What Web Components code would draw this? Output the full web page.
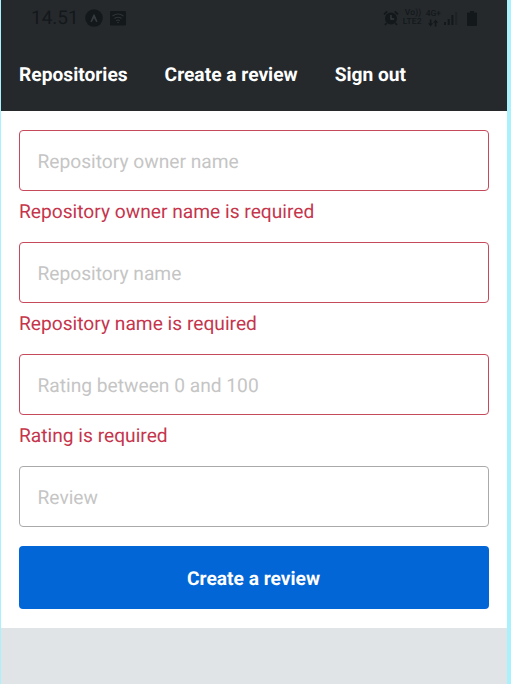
<!DOCTYPE html>
<html lang="en">
<head>
<meta charset="utf-8">
<title>Create a review</title>
<style>
html, body { margin: 0; height: 100%; }
body { font-family: Roboto, "Liberation Sans", sans-serif; font-size: 19.2px; text-rendering: geometricPrecision; }
</style>
</head>
<body>
<review-app></review-app>
<script>
const define = (name, html) => {
  const template = document.createElement('template');
  template.innerHTML = html;
  customElements.define(name, class extends HTMLElement {
    constructor() {
      super();
      this.attachShadow({ mode: 'open' }).append(template.content.cloneNode(true));
    }
  });
};

define('status-bar', `
<style>
:host { display: flex; align-items: center; justify-content: space-between; box-sizing: border-box; height: 36px; padding: 0 30px 0 30px; color: #13181b; }
.group { display: flex; align-items: center; }
.time { font-size: 19px; width: 54px; line-height: 20px; }
svg { display: block; fill: currentColor; }
.tiny { display: grid; font-size: 8.5px; line-height: 9px; font-weight: 500; }
.tiny span { height: 9px; white-space: nowrap; }
.volte { width: 23px; letter-spacing: .2px; }
</style>
<div class="group">
  <span class="time">14.51</span>
  <svg width="18" height="18" viewBox="0 0 18 18"><circle cx="9" cy="9" r="8.8"/><path d="M5.4 12.8 8.2 5.9Q9 4.8 9.8 5.9L12.6 12.8 11.2 13 9 9.2 6.8 13Z" fill="#343a3d"/></svg>
  <svg width="16" height="15" viewBox="0 0 16 15" style="margin-left:7px"><rect width="16" height="14.5" rx="1"/><path d="M2.5 5Q8 1 13.5 5M4.5 7.5Q8 4.9 11.5 7.5M6.2 9.8Q8 8.3 9.8 9.8" fill="none" stroke="#2e3437" stroke-width="1.1"/><circle cx="8" cy="11.5" r=".8" fill="#2e3437"/></svg>
</div>
<div class="group">
  <svg width="16" height="16" viewBox="0 0 16 16"><circle cx="8" cy="8.5" r="6"/><path d="M1 4.4 4.2 1.4M15 4.4 11.8 1.4M3.7 13 2 15M12.3 13 14 15" stroke="currentColor" stroke-width="1.8"/><path d="M8 5v4h3.2" fill="none" stroke="#343a3d" stroke-width="1.3"/></svg>
  <div class="tiny volte" style="margin-left:4px"><span style="padding-left:2px">Vo))</span><span>LTE2</span></div>
  <div class="tiny"><span>4G+</span><svg width="14" height="8" viewBox="0 0 14 8"><path d="M3.8.5h1.6v3.8h1.8L4.6 7.5 2 4.3h1.8ZM8.8 7.5h1.6V3.7h1.8L9.6.5 7 3.7h1.8Z"/></svg></div>
  <svg width="14" height="14" viewBox="0 0 14 14" style="margin:0 0 0 3px"><path d="M0 11h2v3H0ZM3.7 8h2v6h-2ZM7.4 4h2v10h-2Z"/><path d="M11.2 1h2v13h-2Z" opacity=".35"/></svg>
  <svg width="10" height="15" viewBox="0 0 10 15" style="margin-left:9px"><path d="M3 0h4v1.5h2.2q.8 0 .8.8v11.9q0 .8-.8.8H.8Q0 15 0 14.2V2.3q0-.8.8-.8H3Z"/></svg>
</div>`);

define('nav-tab', `
<style>:host { display: block; font-weight: 700; line-height: 22px; color: #fff; white-space: nowrap; }</style>
<slot></slot>`);

define('app-bar', `
<style>
:host { display: block; box-sizing: border-box; height: 111px; background: #25292c; }
nav { display: flex; gap: 37px; padding: 28px 18px 0; }
</style>
<status-bar></status-bar>
<nav><slot></slot></nav>`);

define('form-field', `
<style>
:host { display: block; color: #c5354c; height: 112px; }
:host([plain]) { height: 80px; }
.box { display: flex; align-items: center; box-sizing: border-box; height: 61px; padding: 2px 17.5px 0; border: 1.4px solid #c44a5c; border-radius: 4px; color: #c5c5c5; line-height: 22px; }
:host([plain]) .box { border-color: #aaa; }
.error { line-height: 22px; margin-top: 10px; }
</style>
<div class="box"><slot></slot></div>
<div class="error"><slot name="error"></slot></div>`);

define('submit-button', `
<style>
:host { display: flex; align-items: center; justify-content: center; box-sizing: border-box; height: 63px; padding: 1px 1px 0 0; border-radius: 4px; background: #0366d6; color: #fff; font-weight: 700; }
</style>
<slot></slot>`);

define('review-app', `
<style>
:host { display: flex; flex-direction: column; box-sizing: border-box; height: 100vh; overflow: hidden; background: #e1e4e6; border: solid #a9f1fc; border-width: 0 4px 0 1px; }
.form { box-sizing: border-box; height: 517px; padding: 19px 18px 0; background: #fff; }
</style>
<app-bar>
  <nav-tab>Repositories</nav-tab><nav-tab>Create a review</nav-tab><nav-tab>Sign out</nav-tab>
</app-bar>
<div class="form">
  <form-field>Repository owner name<span slot="error">Repository owner name is required</span></form-field>
  <form-field>Repository name<span slot="error">Repository name is required</span></form-field>
  <form-field>Rating between 0 and 100<span slot="error">Rating is required</span></form-field>
  <form-field plain>Review</form-field>
  <submit-button>Create a review</submit-button>
</div>`);
</script>
</body>
</html>
